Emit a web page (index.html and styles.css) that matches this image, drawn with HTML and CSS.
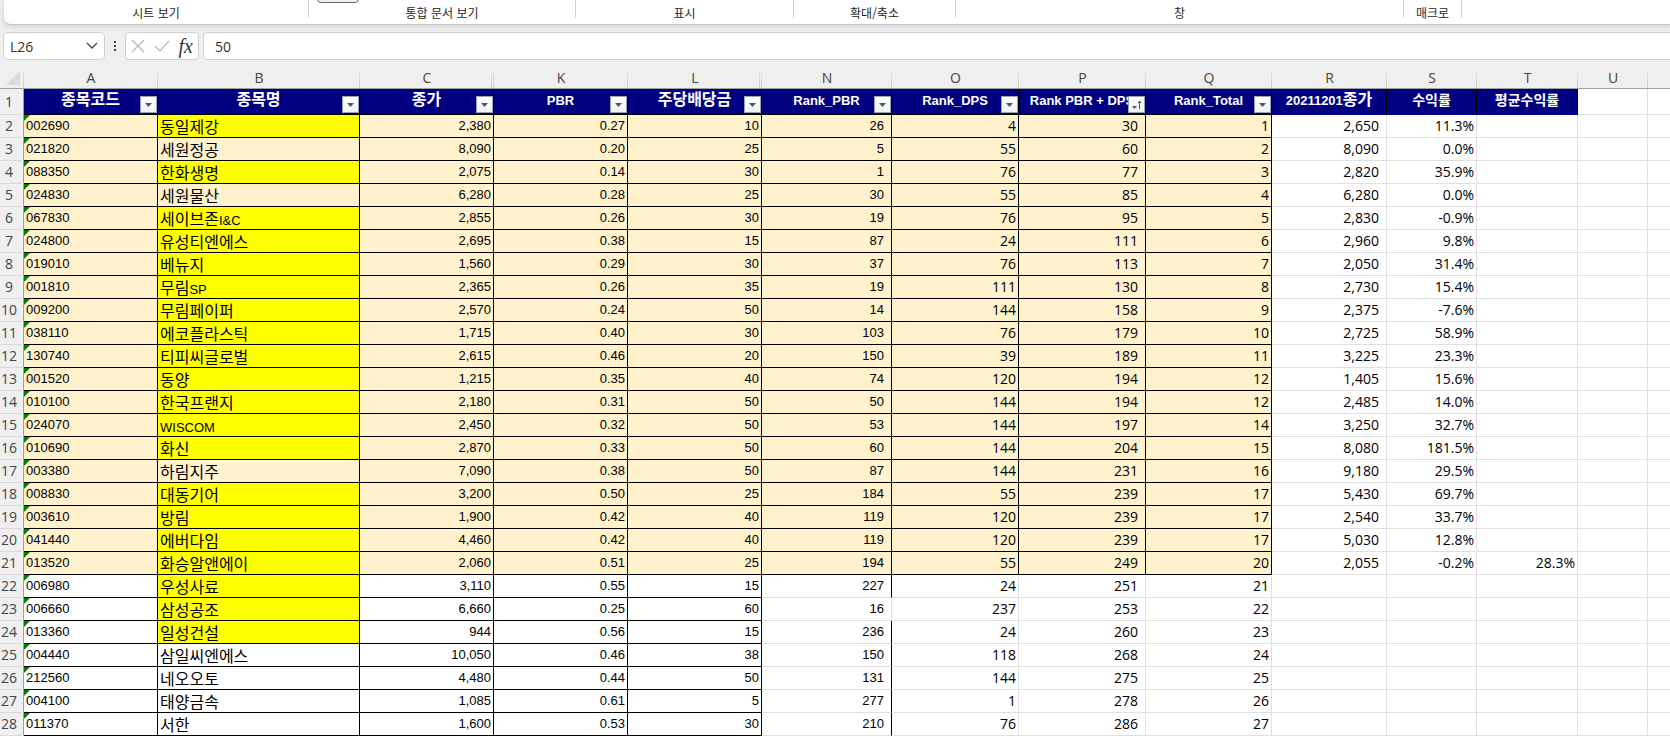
FILE: index.html
```html
<!DOCTYPE html>
<html lang="ko">
<head>
    <meta charset="UTF-8">
    <meta name="viewport" content="width=device-width, initial-scale=1.0">
    <title>Rank PBR + DPS</title>
    <link rel="stylesheet" href="styles.css">
</head>
<body>

<div class="ribbon">
    <div class="group sheet-view">시트 보기</div>
    <div class="group book-view"><button class="ribbon-button" aria-label="기본"></button>통합 문서 보기</div>
    <div class="group show">표시</div>
    <div class="group zoom">확대/축소</div>
    <div class="group window">창</div>
    <div class="group macro">매크로</div>
</div>

<div class="formula-bar">
    <div class="name-box">
        <input type="text" value="L26" aria-label="이름 상자">
        <button aria-label="이름 목록"><svg width="12" height="8" viewBox="0 0 12 8"><path d="M1 1l5 5 5-5" fill="none" stroke="#444" stroke-width="1.3"/></svg></button>
    </div>
    <svg class="dots" width="4" height="12" viewBox="0 0 4 12"><path d="M1 1h2v2H1zM1 5h2v2H1zM1 9h2v2H1z" fill="#444"/></svg>
    <div class="actions">
        <button aria-label="취소"><svg width="14" height="14" viewBox="0 0 14 14"><path d="M1 1l12 12M13 1L1 13" fill="none" stroke="#b5b5b5" stroke-width="1.2"/></svg></button>
        <button aria-label="입력"><svg width="16" height="12" viewBox="0 0 16 12"><path d="M1 6l5 5L15 1" fill="none" stroke="#b5b5b5" stroke-width="1.2"/></svg></button>
        <button class="fx" aria-label="함수 삽입">fx</button>
    </div>
    <input class="formula" type="text" value="50" aria-label="수식 입력줄">
</div>

<table class="sheet" id="sheet">
    <colgroup>
        <col class="w-row"><col class="w-a"><col class="w-b"><col class="w-a"><col class="w-a"><col class="w-a"><col class="w-n"><col class="w-o"><col class="w-o"><col class="w-q"><col class="w-r"><col class="w-s"><col class="w-t"><col class="w-u"><col>
    </colgroup>
    <thead>
        <tr><th class="corner"></th><th>A</th><th>B</th><th class="hidden-next">C</th><th>K</th><th class="hidden-next">L</th><th>N</th><th>O</th><th>P</th><th>Q</th><th>R</th><th>S</th><th>T</th><th>U</th><th></th></tr>
    </thead>
    <tbody></tbody>
</table>

<script src="sheet.js"></script>
</body>
</html>
```

FILE: styles.css
```css
* {
    box-sizing: border-box;
}
body {
    margin: 0;
    background: #efefef;
    color: #000;
    font-family: "Open Sans", "Noto Sans CJK KR", sans-serif;
    font-size: 14px;
    overflow: hidden;
}
button, input {
    margin: 0;
    padding: 0;
    border: 0;
    background: none;
    font: inherit;
    color: #333;
}

/* ribbon */
.ribbon {
    display: flex;
    height: 25px;
    margin-left: 3px;
    background: #fff;
    border-left: 1px solid #e0e0e0;
    border-bottom: 1px solid #c8c8c8;
    border-radius: 0 0 0 8px;
    box-shadow: 0 2px 4px #d4d4d4;
}
.group {
    position: relative;
    height: 18px;
    padding-top: 4px;
    border-right: 1px solid #d0d0d0;
    font-family: "Noto Sans CJK KR", sans-serif;
    font-size: 12px;
    line-height: 18px;
    text-align: center;
    color: #262626;
    white-space: nowrap;
}
.sheet-view { width: 305px; }
.book-view { width: 267px; }
.show { width: 218px; }
.zoom { width: 162px; }
.window { width: 448px; }
.macro { width: 58px; }
.ribbon-button {
    position: absolute;
    left: 8px;
    top: -8px;
    width: 42px;
    height: 11px;
    border: 1px solid #666;
    border-radius: 4px;
    background: #f0f0f0;
}

/* formula bar */
.formula-bar {
    display: flex;
    align-items: center;
    height: 28px;
    margin: 7px 0 7px 3px;
}
.name-box, .actions, .formula {
    height: 28px;
    background: #fff;
    border: 1px solid #d0d0d0;
    border-radius: 4px;
}
.name-box {
    display: flex;
    align-items: center;
    width: 102px;
    padding: 0 6px;
}
.name-box input {
    flex: 1;
    min-width: 0;
}
.name-box button, .actions button {
    display: flex;
    align-items: center;
}
.dots {
    margin: 0 8px;
}
.actions {
    display: flex;
    align-items: center;
    justify-content: space-between;
    width: 74px;
    padding: 0 5px;
}
.actions .fx {
    font-family: "Liberation Serif", serif;
    font-size: 20px;
    font-style: italic;
    line-height: 20px;
}
.formula {
    flex: 1;
    margin-left: 4px;
    padding-left: 11px;
    border-right: 0;
    border-radius: 4px 0 0 4px;
}

/* sheet */
.sheet {
    width: 100%;
    table-layout: fixed;
    border-collapse: separate;
    border-spacing: 0;
    background: #fff;
}
.w-row { width: 24px; }
.w-a { width: 134px; }
.w-b { width: 202px; }
.w-n { width: 130px; }
.w-o { width: 127px; }
.w-q { width: 126px; }
.w-r { width: 115px; }
.w-s { width: 90px; }
.w-t { width: 101px; }
.w-u { width: 70px; }
.sheet th, .sheet td {
    position: relative;
    height: 23px;
    padding: 0 2px;
    border-right: 1px solid #e0e0e0;
    border-bottom: 1px solid #e0e0e0;
    line-height: 20px;
    white-space: nowrap;
}
.sheet thead th {
    height: 22px;
    background: linear-gradient(#efefef, #c8c8c8) right / 1px 100% no-repeat #efefef;
    border-right: 0;
    border-bottom-color: #a0a0a0;
    font-weight: normal;
    color: #444;
}
.sheet thead th:last-child {
    background: #efefef;
}
.sheet td:last-child {
    border-right: 0;
}
.hidden-next::after {
    content: "";
    position: absolute;
    top: 0;
    right: 2px;
    bottom: 0;
    width: 1px;
    background: linear-gradient(#efefef, #c8c8c8);
}
.corner::after {
    content: "";
    position: absolute;
    right: 4px;
    bottom: 3px;
    width: 14px;
    height: 14px;
    background: #dcdcdc;
    clip-path: polygon(100% 0, 100% 100%, 0 100%);
}
.sheet tbody th {
    padding: 0 5px 0 0;
    background: #efefef;
    border-right-color: #a0a0a0;
    border-bottom-color: #d9d9d9;
    font-weight: normal;
    text-align: center;
    color: #444;
}
.sheet td {
    text-align: right;
}
.sheet .code, .sheet .num {
    font-family: "Liberation Sans", Arial, sans-serif;
    font-size: 13px;
}
.sheet .code, .sheet .name {
    text-align: left;
}
.sheet .name {
    font-family: "Noto Sans CJK KR", sans-serif;
    font-size: 16px;
}
.latin {
    font-family: "Liberation Sans", Arial, sans-serif;
    font-size: 13px;
    line-height: 1;
}
.sheet .indent {
    padding-right: 7px;
}
.code::before {
    content: "";
    position: absolute;
    left: 0;
    top: 0;
    border-top: 6px solid #008000;
    border-right: 6px solid transparent;
}
.sheet .boxed {
    border-color: #000;
}
.sheet .right-line {
    border-right-color: #000;
}
.filled {
    background: #fff2cc;
}
.yellow {
    background: #ff0;
}

/* title row */
.sheet .titles th, .sheet .titles td {
    height: 26px;
}
.sheet .title {
    padding-bottom: 2px;
    background: #000080;
    border-color: #000;
    color: #fff;
    font-family: "Liberation Sans", "Noto Sans CJK KR", sans-serif;
    font-size: 13px;
    font-weight: bold;
    text-align: center;
}
.sheet .no-filter {
    border-bottom-color: #000080;
}
.title span {
    line-height: 1;
}
.title .large {
    font-size: 16px;
}
.title .medium {
    font-size: 14px;
}
.filter {
    position: absolute;
    right: 0;
    bottom: 1px;
    width: 17px;
    height: 17px;
    background: linear-gradient(#fff, #eef1f6);
    border: 1px solid #9aa3b0;
}
.filter svg {
    display: block;
}
```

FILE: sheet.js
```js
// [row, code, name, close, PBR, dividend, rank PBR, rank DPS, sum, total, later close, return, average]
const rows = [
    [2, '002690', '동일제강', '2,380', '0.27', 10, 26, 4, 30, 1, '2,650', '11.3%'],
    [3, '021820', '세원정공', '8,090', '0.20', 25, 5, 55, 60, 2, '8,090', '0.0%'],
    [4, '088350', '한화생명', '2,075', '0.14', 30, 1, 76, 77, 3, '2,820', '35.9%'],
    [5, '024830', '세원물산', '6,280', '0.28', 25, 30, 55, 85, 4, '6,280', '0.0%'],
    [6, '067830', '세이브존I&C', '2,855', '0.26', 30, 19, 76, 95, 5, '2,830', '-0.9%'],
    [7, '024800', '유성티엔에스', '2,695', '0.38', 15, 87, 24, 111, 6, '2,960', '9.8%'],
    [8, '019010', '베뉴지', '1,560', '0.29', 30, 37, 76, 113, 7, '2,050', '31.4%'],
    [9, '001810', '무림SP', '2,365', '0.26', 35, 19, 111, 130, 8, '2,730', '15.4%'],
    [10, '009200', '무림페이퍼', '2,570', '0.24', 50, 14, 144, 158, 9, '2,375', '-7.6%'],
    [11, '038110', '에코플라스틱', '1,715', '0.40', 30, 103, 76, 179, 10, '2,725', '58.9%'],
    [12, '130740', '티피씨글로벌', '2,615', '0.46', 20, 150, 39, 189, 11, '3,225', '23.3%'],
    [13, '001520', '동양', '1,215', '0.35', 40, 74, 120, 194, 12, '1,405', '15.6%'],
    [14, '010100', '한국프랜지', '2,180', '0.31', 50, 50, 144, 194, 12, '2,485', '14.0%'],
    [15, '024070', 'WISCOM', '2,450', '0.32', 50, 53, 144, 197, 14, '3,250', '32.7%'],
    [16, '010690', '화신', '2,870', '0.33', 50, 60, 144, 204, 15, '8,080', '181.5%'],
    [17, '003380', '하림지주', '7,090', '0.38', 50, 87, 144, 231, 16, '9,180', '29.5%'],
    [18, '008830', '대동기어', '3,200', '0.50', 25, 184, 55, 239, 17, '5,430', '69.7%'],
    [19, '003610', '방림', '1,900', '0.42', 40, 119, 120, 239, 17, '2,540', '33.7%'],
    [20, '041440', '에버다임', '4,460', '0.42', 40, 119, 120, 239, 17, '5,030', '12.8%'],
    [21, '013520', '화승알앤에이', '2,060', '0.51', 25, 194, 55, 249, 20, '2,055', '-0.2%', '28.3%'],
    [22, '006980', '우성사료', '3,110', '0.55', 15, 227, 24, 251, 21],
    [23, '006660', '삼성공조', '6,660', '0.25', 60, 16, 237, 253, 22],
    [24, '013360', '일성건설', '944', '0.56', 15, 236, 24, 260, 23],
    [25, '004440', '삼일씨엔에스', '10,050', '0.46', 38, 150, 118, 268, 24],
    [26, '212560', '네오오토', '4,480', '0.44', 50, 131, 144, 275, 25],
    [27, '004100', '태양금속', '1,085', '0.61', 5, 277, 1, 278, 26],
    [28, '011370', '서한', '1,600', '0.53', 30, 210, 76, 286, 27]
];

const titles = [
    ['종목코드', 'large'], ['종목명', 'large'], ['종가', 'large'], ['PBR'], ['주당배당금', 'large'],
    ['Rank_PBR'], ['Rank_DPS'], ['Rank PBR + DPS'], ['Rank_Total'],
    ['20211201<span class="large">종가</span>'], ['수익률', 'medium'], ['평균수익률', 'medium']
];

const plain = [3, 5, 17, 25, 26, 27, 28];
const styles = ['code', 'name', 'num', 'num', 'num', 'num indent', '', 'indent', '', 'indent', '', '', '', ''];

const arrow = '<path d="M4 6h7l-3.500 4z" fill="#555"/>';
const sorted = '<path d="M3 9h5l-2.500 3z" fill="#555"/><path d="M10.500 12V4M9 6l1.500-2L12 6" fill="none" stroke="#555"/>';

function filterButton(i) {
    return `<button class="filter" aria-label="필터"><svg width="15" height="15" viewBox="0 0 15 15">${i === 7 ? sorted : arrow}</svg></button>`;
}

const body = document.querySelector('#sheet tbody');
let html = '<tr class="titles"><th>1</th>';
titles.forEach(([text, size], i) => {
    html += `<td class="title${i < 9 ? '' : ' no-filter'}"><span class="${size || ''}">${text}</span>${i < 9 ? filterButton(i) : ''}</td>`;
});
html += '<td></td><td></td></tr>';

for (const [row, ...cells] of rows) {
    html += `<tr><th>${row}</th>`;
    for (let i = 0; i < 14; i++) {
        const classes = [styles[i]];
        if (i < 5 || (row < 22 && i < 9)) classes.push('boxed');
        if (i === 5 && row !== 23) classes.push('right-line');
        if (i === 1 && !plain.includes(row)) classes.push('yellow');
        else if (row < 22 && i < 9) classes.push('filled');
        let text = String(cells[i] ?? '');
        if (i === 1) text = text.replace(/[A-Z&]+/, m => `<span class="latin">${m.replace('&', '&amp;')}</span>`);
        html += `<td class="${classes.join(' ').trim()}">${text}</td>`;
    }
    html += '</tr>';
}
body.innerHTML = html;
```
